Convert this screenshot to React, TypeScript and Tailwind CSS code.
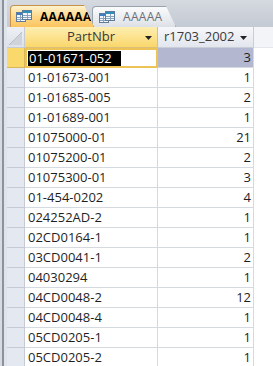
import React from "react";

const rows: [string, number][] = [
  ["01-01671-052", 3],
  ["01-01673-001", 1],
  ["01-01685-005", 2],
  ["01-01689-001", 1],
  ["01075000-01", 21],
  ["01075200-01", 2],
  ["01075300-01", 3],
  ["01-454-0202", 4],
  ["024252AD-2", 1],
  ["02CD0164-1", 1],
  ["03CD0041-1", 2],
  ["04030294", 1],
  ["04CD0048-2", 12],
  ["04CD0048-4", 1],
  ["05CD0205-1", 1],
  ["05CD0205-2", 1],
];

function TableIcon() {
  return (
    <svg width="16" height="13" viewBox="0 0 16 13">
      <rect x="0.5" y="2.5" width="9" height="9" fill="#f4f7fb" stroke="#5f7c9c" />
      <rect x="1" y="3" width="8" height="2" fill="#3f7fc0" />
      <line x1="1" y1="7.5" x2="9" y2="7.5" stroke="#8aa3bf" />
      <line x1="1" y1="9.5" x2="9" y2="9.5" stroke="#8aa3bf" />
      <line x1="4.5" y1="5" x2="4.5" y2="11" stroke="#8aa3bf" />
      <rect x="6.5" y="0.5" width="9" height="9" fill="#f4f7fb" stroke="#5f7c9c" />
      <rect x="7" y="1" width="8" height="2" fill="#2e8fb8" />
      <line x1="7" y1="5.5" x2="15" y2="5.5" stroke="#8aa3bf" />
      <line x1="7" y1="7.5" x2="15" y2="7.5" stroke="#8aa3bf" />
      <line x1="11.5" y1="3" x2="11.5" y2="9" stroke="#8aa3bf" />
    </svg>
  );
}

function Arrow() {
  return (
    <svg width="7" height="4" viewBox="0 0 7 4">
      <path d="M0 0 H7 L3.5 4 Z" fill="#222" />
    </svg>
  );
}

export default function App() {
  return (
    <div className="flex h-[366px] w-[273px] overflow-hidden bg-white font-['Open_Sans','Noto_Sans',sans-serif] text-[13px] text-[#1f1f1f]">
      {/* window frame on the left */}
      <div className="flex w-[7px] shrink-0">
        <div className="w-[2px] bg-[#d6dae1]" />
        <div className="w-[2px] bg-[#8b929c]" />
        <div className="w-[3px] bg-[#dfe3ea]" />
      </div>

      <div className="flex min-w-0 flex-1 flex-col">
        {/* tab strip */}
        <div className="relative flex h-[27px] shrink-0 items-end bg-gradient-to-b from-[#d5d9e0] to-[#c4cad3] pl-[3px]">
          <div className="relative z-10 flex h-[22px] w-[84px] items-center gap-[8px] rounded-tl-[4px] border border-b-0 border-[#c8914a] bg-gradient-to-b from-[#fff3cc] via-[#fdd88a] to-[#fbc45e] pl-[5px] [clip-path:polygon(0_0,74px_0,100%_100%,0_100%)]">
            <TableIcon />
            <span className="text-[12px] font-bold leading-none tracking-[0.3px] text-black">AAAAAA</span>
          </div>
          <div className="-ml-[2px] flex h-[21px] w-[84px] items-center gap-[8px] rounded-tl-[4px] border border-b-0 border-[#9aa2ad] bg-gradient-to-b from-[#fafbfc] to-[#dde1e7] pl-[6px] [clip-path:polygon(0_0,74px_0,100%_100%,0_100%)]">
            <TableIcon />
            <span className="text-[12px] leading-none tracking-[0.3px] text-[#6b6f75]">AAAAA</span>
          </div>
        </div>

        {/* header row */}
        <div className="flex h-[21px] shrink-0 bg-[#f3f4f8]">
          <div className="flex w-[18px] shrink-0 items-end justify-end border-r border-b border-[#c5cad3] bg-gradient-to-b from-[#eef0f5] to-[#dde1e9] pb-[2px] pr-[2px]">
            <svg width="13" height="13" viewBox="0 0 13 13">
              <path d="M13 0 V13 H0 Z" fill="#cfd4dc" />
              <path d="M13 0 L0 13" stroke="#b9bfc9" strokeWidth="1" />
            </svg>
          </div>
          <div className="relative flex w-[133px] shrink-0 items-center justify-center border-r border-b border-[#dcc07a] bg-gradient-to-b from-[#fdeeb0] to-[#fad76a] text-[#3a3a3a]">
            <span>PartNbr</span>
            <span className="absolute right-[5px] top-[9px] flex">
              <Arrow />
            </span>
          </div>
          <div className="relative flex w-[96px] shrink-0 items-center border-r border-b border-[#c9cdd6] bg-gradient-to-b from-[#f6f7fa] to-[#e3e6ee] pl-[6px] text-[#3a3a3a]">
            <span>r1703_2002</span>
            <span className="absolute right-[6px] top-[9px] flex">
              <Arrow />
            </span>
          </div>
          <div className="flex-1 border-b border-[#e3e6ec]" />
        </div>

        {/* data rows */}
        {rows.map(([part, n], i) => {
          const first = i === 0;
          return (
            <div key={part} className="flex h-[20px] shrink-0">
              <div
                className={
                  first
                    ? "w-[18px] shrink-0 border-r border-b border-[#d9b85a] bg-[#f9d86c]"
                    : "w-[18px] shrink-0 border-r border-b border-[#c5cad3] bg-[#e4e8f0]"
                }
              />
              {first ? (
                <div className="flex w-[133px] shrink-0 items-center border-2 border-[#ecc456] bg-white pl-[1px]">
                  <span className="bg-black pr-[9px] pl-[1px] leading-[15px] text-white">{part}</span>
                </div>
              ) : (
                <div className="flex w-[133px] shrink-0 items-center border-r border-b border-[#d5d9e0] pl-[3px]">
                  {part}
                </div>
              )}
              <div
                className={
                  first
                    ? "flex w-[96px] shrink-0 items-center justify-end border-r border-b border-[#d5d9e0] bg-[#b3b8d0] pr-[2px]"
                    : "flex w-[96px] shrink-0 items-center justify-end border-r border-b border-[#d5d9e0] pr-[2px]"
                }
              >
                {n}
              </div>
              <div className="flex-1" />
            </div>
          );
        })}
      </div>
    </div>
  );
}
